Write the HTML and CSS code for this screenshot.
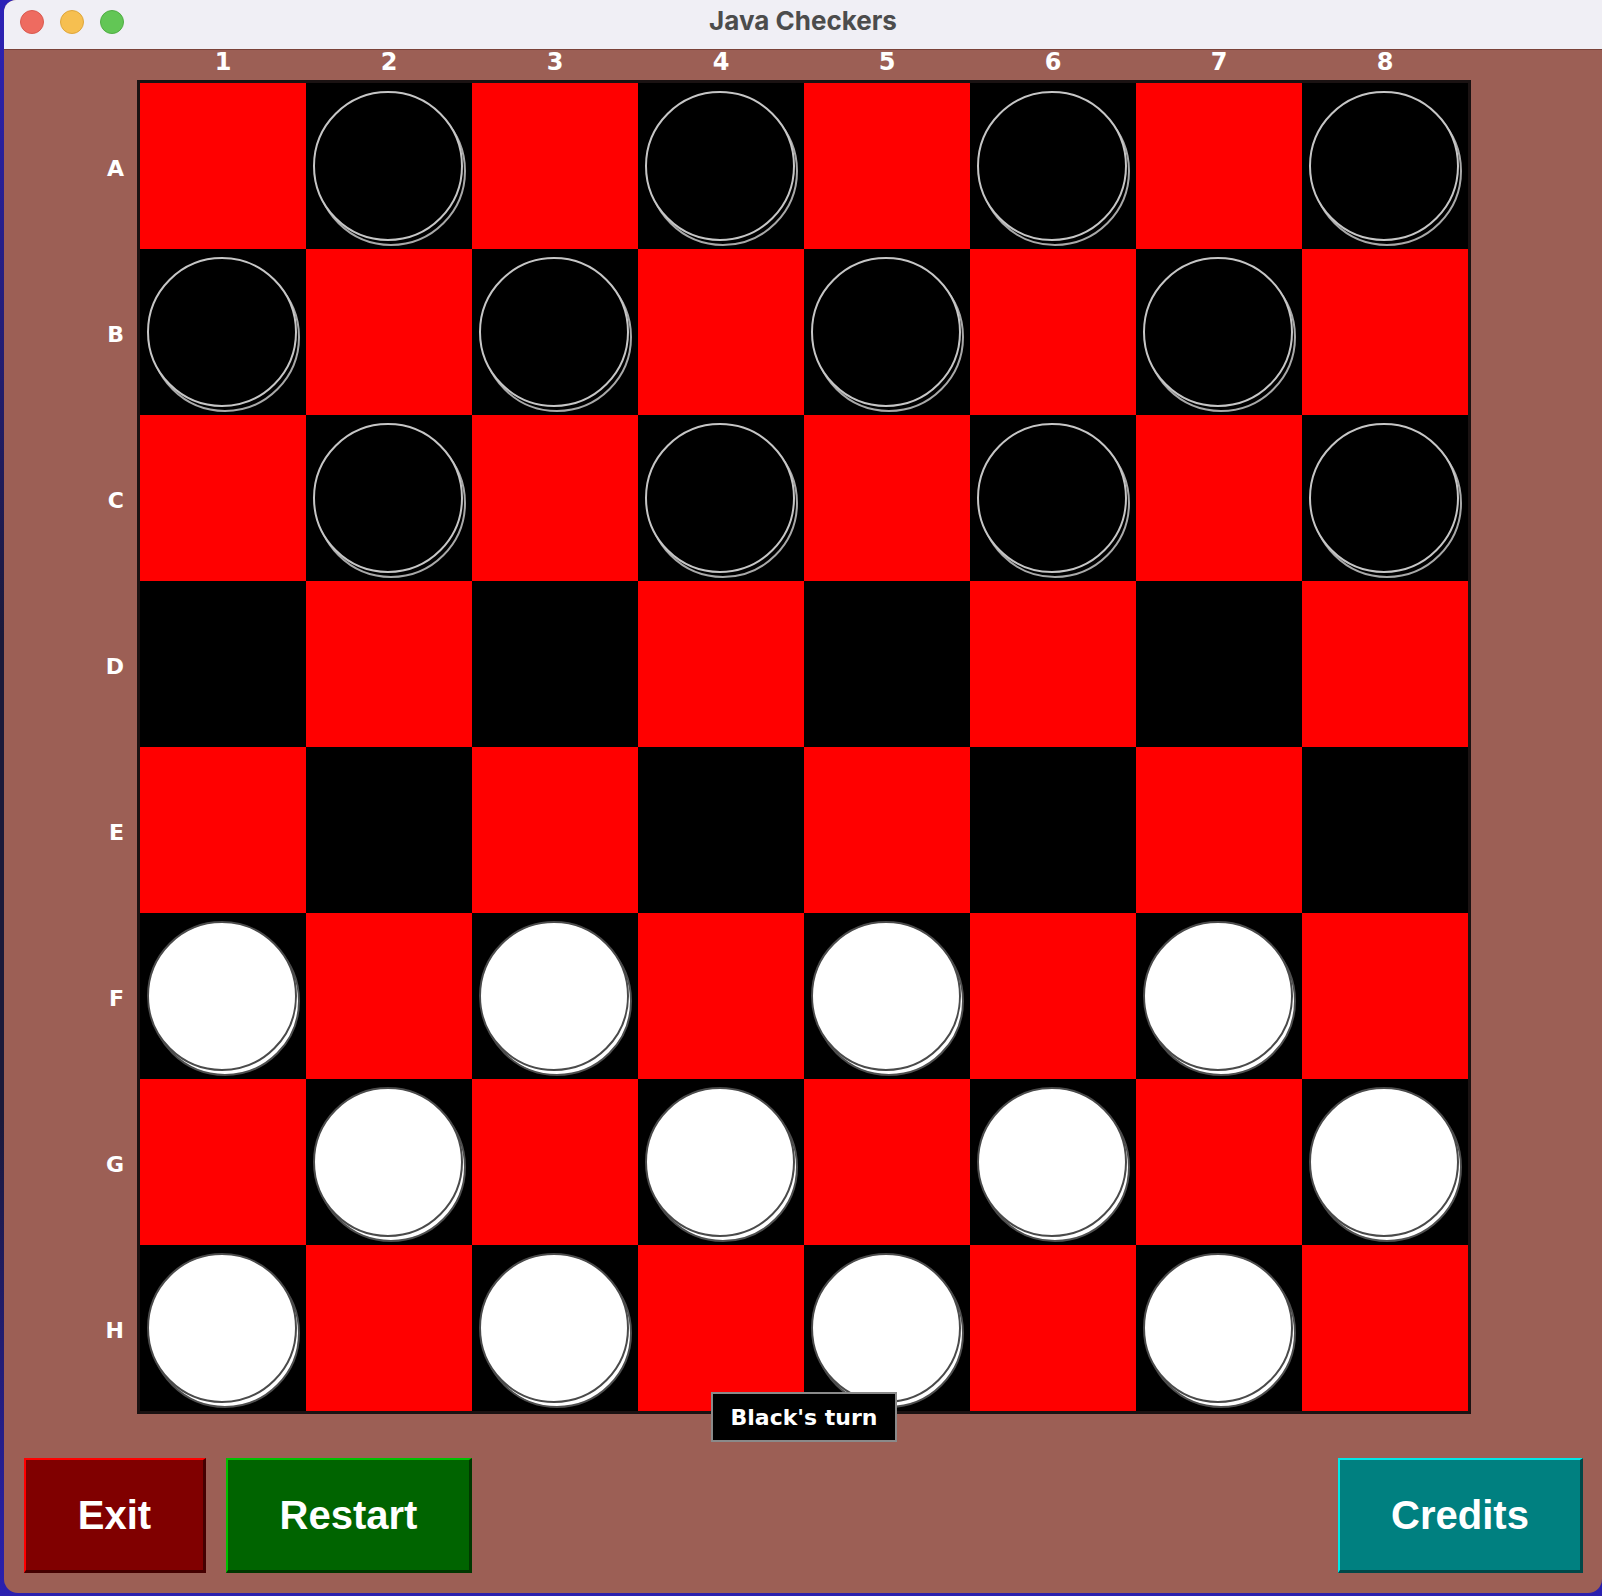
FILE: index.html
```html
<!DOCTYPE html>
<html lang="en">
<head>
<meta charset="utf-8">
<title>Java Checkers</title>
<link rel="stylesheet" href="styles.css">
</head>
<body>
<div class="window">
  <div class="titlebar">
    <div class="lights">
      <span class="light red"></span>
      <span class="light yellow"></span>
      <span class="light green"></span>
    </div>
    <div class="title">Java Checkers</div>
  </div>
  <div class="content">
    <div class="play">
      <div class="corner"></div>
      <div class="cols">
        <span>1</span><span>2</span><span>3</span><span>4</span><span>5</span><span>6</span><span>7</span><span>8</span>
      </div>
      <div class="rows">
        <span>A</span><span>B</span><span>C</span><span>D</span><span>E</span><span>F</span><span>G</span><span>H</span>
      </div>
      <div class="board-wrap">
        <div class="board">
          <div class="sq r"></div><div class="sq b"><div class="piece black"></div></div><div class="sq r"></div><div class="sq b"><div class="piece black"></div></div><div class="sq r"></div><div class="sq b"><div class="piece black"></div></div><div class="sq r"></div><div class="sq b"><div class="piece black"></div></div>
          <div class="sq b"><div class="piece black"></div></div><div class="sq r"></div><div class="sq b"><div class="piece black"></div></div><div class="sq r"></div><div class="sq b"><div class="piece black"></div></div><div class="sq r"></div><div class="sq b"><div class="piece black"></div></div><div class="sq r"></div>
          <div class="sq r"></div><div class="sq b"><div class="piece black"></div></div><div class="sq r"></div><div class="sq b"><div class="piece black"></div></div><div class="sq r"></div><div class="sq b"><div class="piece black"></div></div><div class="sq r"></div><div class="sq b"><div class="piece black"></div></div>
          <div class="sq b"></div><div class="sq r"></div><div class="sq b"></div><div class="sq r"></div><div class="sq b"></div><div class="sq r"></div><div class="sq b"></div><div class="sq r"></div>
          <div class="sq r"></div><div class="sq b"></div><div class="sq r"></div><div class="sq b"></div><div class="sq r"></div><div class="sq b"></div><div class="sq r"></div><div class="sq b"></div>
          <div class="sq b"><div class="piece white"></div></div><div class="sq r"></div><div class="sq b"><div class="piece white"></div></div><div class="sq r"></div><div class="sq b"><div class="piece white"></div></div><div class="sq r"></div><div class="sq b"><div class="piece white"></div></div><div class="sq r"></div>
          <div class="sq r"></div><div class="sq b"><div class="piece white"></div></div><div class="sq r"></div><div class="sq b"><div class="piece white"></div></div><div class="sq r"></div><div class="sq b"><div class="piece white"></div></div><div class="sq r"></div><div class="sq b"><div class="piece white"></div></div>
          <div class="sq b"><div class="piece white"></div></div><div class="sq r"></div><div class="sq b"><div class="piece white"></div></div><div class="sq r"></div><div class="sq b"><div class="piece white"></div></div><div class="sq r"></div><div class="sq b"><div class="piece white"></div></div><div class="sq r"></div>
        </div>
        <div class="status">Black's turn</div>
      </div>
    </div>
    <div class="buttons">
      <button class="btn exit">Exit</button>
      <button class="btn restart">Restart</button>
      <button class="btn credits">Credits</button>
    </div>
  </div>
</div>
</body>
</html>
```
FILE: styles.css
```css
html, body {
  margin: 0;
  padding: 0;
}
body {
  width: 1602px;
  height: 1596px;
  background: linear-gradient(180deg, #2d22b8 0%, #1b1a3a 40%, #1b1a3a 70%, #2a20b0 100%);
  overflow: hidden;
}
.window {
  margin-left: 4px;
  width: 1598px;
  height: 1593px;
  background: #9c5f55;
  border-radius: 12px 0 14px 14px;
  overflow: hidden;
  display: flex;
  flex-direction: column;
}
.titlebar {
  height: 49px;
  border-bottom: 1px solid #7a4239;
  background: #f0eff5;
  position: relative;
  display: flex;
  align-items: center;
  justify-content: center;
}
.lights {
  position: absolute;
  left: 16px;
  top: 10px;
  display: flex;
  gap: 16px;
}
.light {
  width: 24px;
  height: 24px;
  border-radius: 50%;
  box-sizing: border-box;
}
.light.red { background: #ee6b60; border: 1px solid #d95a4f; }
.light.yellow { background: #f6bf50; border: 1px solid #dea63c; }
.light.green { background: #62c655; border: 1px solid #50ad44; }
.title {
  font-family: "Inter", "Liberation Sans", sans-serif;
  font-weight: 700;
  font-size: 26px;
  color: #4c4c4c;
  padding-bottom: 8px;
}
.content {
  flex: 1;
  display: flex;
  flex-direction: column;
}
.play {
  display: grid;
  grid-template-columns: 133px max-content;
  grid-template-rows: 30px auto;
  font-family: "DejaVu Sans", sans-serif;
  font-weight: 700;
  color: #ffffff;
}
.cols {
  display: grid;
  grid-template-columns: repeat(8, 166px);
  padding-left: 3px;
  font-size: 24px;
  line-height: 24px;
  text-align: center;
}
.rows {
  display: grid;
  grid-template-rows: repeat(8, 166px);
  padding-top: 3px;
  font-size: 22px;
}
.rows span {
  display: flex;
  align-items: center;
  justify-content: flex-end;
  padding-right: 13px;
  padding-top: 4px;
}
.board-wrap {
  position: relative;
  width: max-content;
}
.board {
  display: grid;
  grid-template-columns: repeat(8, 166px);
  grid-auto-rows: 166px;
  border: 3px solid #1a1212;
  width: max-content;
}
.sq {
  position: relative;
  isolation: isolate;
}
.sq.r { background: #ff0000; }
.sq.b { background: #000000; }
.piece {
  position: absolute;
  left: 7px;
  top: 8px;
  width: 150px;
  height: 150px;
  border-radius: 50%;
  box-sizing: border-box;
}
.piece::before {
  content: "";
  position: absolute;
  left: 1px;
  top: 3px;
  width: 150px;
  height: 150px;
  box-sizing: border-box;
  border-radius: 50%;
  z-index: -1;
}
.piece.black {
  background: #000;
  border: 2px solid #c6c6c6;
}
.piece.black::before {
  background: #000;
  border: 2px solid #a8a8a8;
}
.piece.white {
  background: #fff;
  border: 2px solid #4a4a4a;
}
.piece.white::before {
  background: #fff;
  border: 2px solid #4f4f4f;
}
.status {
  position: absolute;
  left: 50%;
  bottom: -28px;
  transform: translateX(-50%);
  width: 186px;
  height: 50px;
  box-sizing: border-box;
  background: #000;
  border: 2px solid #8a8a8a;
  color: #fff;
  font-size: 22px;
  display: flex;
  align-items: center;
  justify-content: center;
}
.buttons {
  display: flex;
  gap: 20px;
  margin-top: 44px;
  padding: 0 19px 0 20px;
}
.btn {
  height: 115px;
  box-sizing: border-box;
  font-family: "Liberation Sans", Arial, sans-serif;
  font-weight: 700;
  font-size: 40px;
  color: #ffffff;
  padding: 0;
  border-style: solid;
  border-width: 2px 3px 3px 2px;
}
.btn.exit {
  width: 182px;
  background: #800000;
  border-color: #ff0000 #450000 #450000 #ff0000;
}
.btn.restart {
  width: 246px;
  background: #006400;
  border-color: #00c000 #003800 #003800 #00c000;
}
.btn.credits {
  width: 245px;
  margin-left: auto;
  background: #008080;
  border-color: #00e8e8 #004848 #004848 #00e8e8;
}
```
